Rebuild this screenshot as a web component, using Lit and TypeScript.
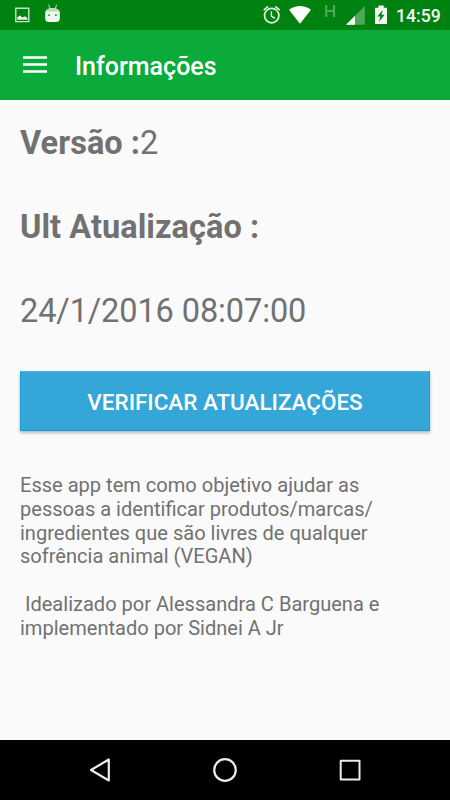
import { LitElement, html, css } from "lit";
import { customElement } from "lit/decorators.js";

@customElement("status-bar")
class StatusBar extends LitElement {
  static styles = css`
    :host { display: flex; height: 30px; background: #008210; }
    svg { display: block; flex: none; }
    .time {
      font: 500 17.6px/32px Roboto, sans-serif;
      color: #f4faf4;
      margin-left: -54px;
    }
  `;
  render() {
    return html`
      <svg width="450" height="30" viewBox="0 0 450 30" fill="none">
        <path d="M15.8 8.2H28.8V21.6H15.8Z" stroke="#c6e3c8" stroke-width="1.4" />
        <path d="M17.3 19.8V17.2L20 15.4L22.3 17.4L25.2 16.3L27.5 18.2V19.8Z" fill="#e8f5e9" />
        <path d="M48.6 4.6L49.8 8.4M56.6 4.6L55.4 8.4" stroke="#a8d4ac" stroke-width="1.1" />
        <path d="M45.2 12Q46.5 8 52.5 8T59.8 12V18.5Q59.8 22 56 22H49Q45.2 22 45.2 18.5Z" fill="#f0f7f0" />
        <path d="M45.7 11.4Q47 8.2 52.5 8.2T59.3 11.4Z" fill="#b4dab7" />
        <path d="M48.2 14.2h1.8v1.8h-1.8zM55 14.2h1.8v1.8h-1.8z" fill="#3f9f49" />
        <g stroke="#e3f2e4">
          <circle cx="271.7" cy="15.6" r="7.2" stroke-width="1.7" />
          <path d="M271.4 11.2V16L275 18.3" stroke-width="1.4" />
          <path d="M263.7 10.1L268.1 6.4M275.3 6.4L279.7 10.1" stroke-width="1.7" />
        </g>
        <path d="M289 9.7Q300 2.2 311 9.7L300 23.7Z" fill="#fff" />
        <path d="M326.2 5V17M334 5V17M326 11H334.3" stroke="#4da958" stroke-width="2.2" />
        <path d="M346 24.8L364.8 6V24.8Z" fill="#4da958" />
        <path d="M346 24.8L355 15.8V24.8Z" fill="#fff" />
        <path d="M375 7.7H378.5V5.5H383.7V7.7H387V24H375Z" fill="#f1f8f1" />
        <path d="M382.8 9.8L377.4 16.6H380.4L378.9 22L384.6 14.8H381.5Z" fill="#008210" />
      </svg>
      <span class="time">14:59</span>
    `;
  }
}

@customElement("nav-bar")
class NavBar extends LitElement {
  static styles = css`
    :host { display: flex; height: 60px; background: #000; justify-content: center; }
    svg { display: block; }
  `;
  render() {
    return html`
      <svg width="450" height="60" viewBox="0 0 450 60" fill="none" stroke="#ebebeb" stroke-width="2.2" stroke-linejoin="round">
        <path d="M108.8 19.5V40.5L91 30Z" />
        <circle cx="225" cy="30" r="10.8" />
        <rect x="340.7" y="20.7" width="18.8" height="18.8" stroke-width="2" />
      </svg>
    `;
  }
}

@customElement("app-root")
class AppRoot extends LitElement {
  static styles = css`
    :host {
      display: flex;
      flex-direction: column;
      height: 800px;
      background: #fafafa;
      color: #717171;
      font-family: Roboto, sans-serif;
      overflow: hidden;
    }
    header {
      display: flex;
      align-items: center;
      height: 70px;
      background: #0aab3b;
      color: #fff;
      flex: none;
    }
    .menu { margin: 0 0 2px 23px; width: 24px; height: 18px; flex: none; }
    h1 { margin: 3px 0 0 28px; font-size: 25px; line-height: 30px; font-weight: 500; }
    main { flex: 1; padding: 22px 20px 0; }
    .row { height: 42px; line-height: 42px; margin-bottom: 42px; font-size: 32.5px; white-space: nowrap; }
    .row b { letter-spacing: 0.05px; }
    .row:last-of-type { margin-bottom: 39px; letter-spacing: -0.1px; }
    button {
      display: block;
      width: 410px;
      height: 60px;
      padding: 2px 0 0;
      border: 1px solid #14a2da;
      border-top-color: #55b0d6;
      background: #34a7d8;
      color: #fff;
      font: 500 22.45px/30px Roboto, sans-serif;
      box-shadow: 0 2px 3px rgba(0, 0, 0, 0.28);
    }
    .about { margin: 43px 0 0; font-size: 20.06px; line-height: 23.8px; white-space: pre; }
  `;
  render() {
    return html`
      <status-bar></status-bar>
      <header>
        <svg class="menu" viewBox="0 0 24 18"><path d="M0 2.5H24M0 9.5H24M0 16.5H24" stroke="#fff" stroke-width="2.5" /></svg>
        <h1>Informações</h1>
      </header>
      <main>
        <div class="row"><b>Versão :</b>2</div>
        <div class="row"><b>Ult Atualização :</b></div>
        <div class="row">24/1/2016 08:07:00</div>
        <button>VERIFICAR ATUALIZAÇÕES</button>
        <p class="about">${"Esse app tem como objetivo ajudar as\npessoas a identificar produtos/marcas/\ningredientes que são livres de qualquer\nsofrência animal (VEGAN)\n\n Idealizado por Alessandra C Barguena e\nimplementado por Sidnei A Jr"}</p>
      </main>
      <nav-bar></nav-bar>
    `;
  }
}
